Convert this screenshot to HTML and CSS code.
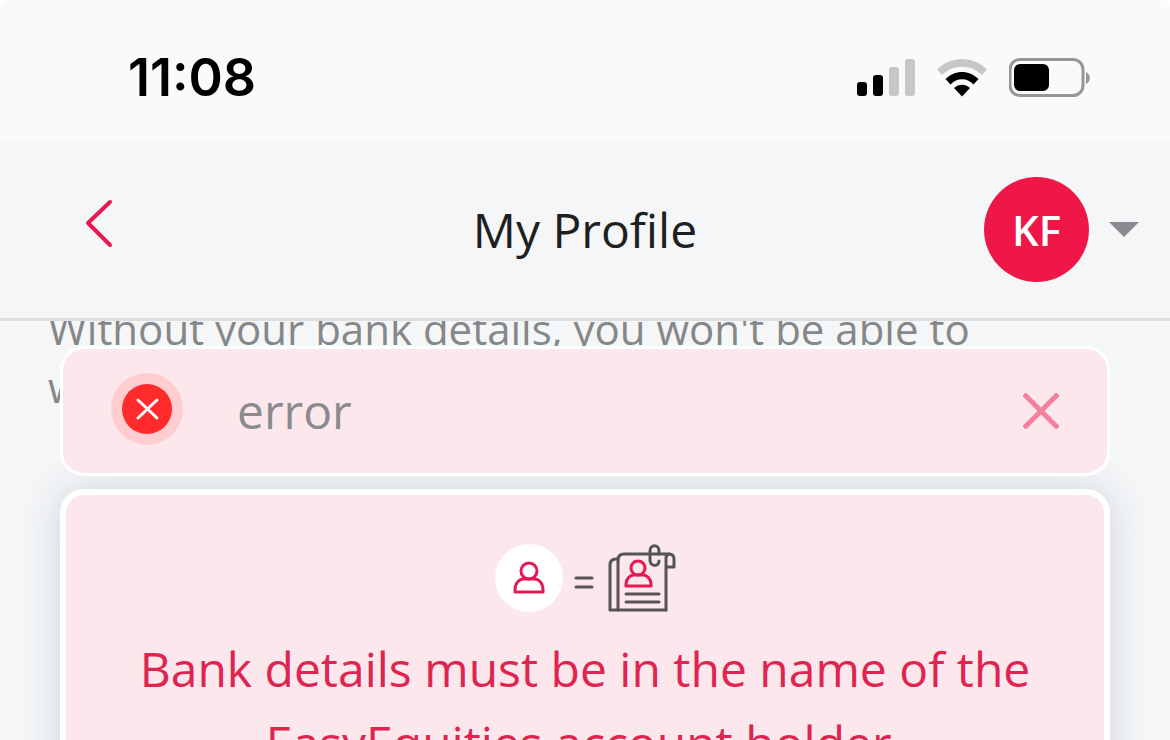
FILE: index.html
```html
<!DOCTYPE html>
<html lang="en">
<head>
  <meta charset="UTF-8" />
  <meta name="viewport" content="width=device-width, initial-scale=1.0"/>
  <title>My Profile</title>
  <link rel="stylesheet" href="styles.css">
</head>
<body>

  <div class="status-bar">
    <span class="time">11:08</span>
    <div class="status-icons">
      <svg class="signal" width="58" height="38" viewBox="0 0 58 38">
        <rect x="0" y="23" width="10" height="14" rx="3"/>
        <rect x="16" y="16" width="10" height="21" rx="3"/>
        <rect class="off" x="32" y="8" width="10" height="29" rx="3"/>
        <rect class="off" x="48" y="0" width="10" height="37" rx="3"/>
      </svg>
      <svg class="wifi" width="50" height="38" viewBox="0 0 50 38">
        <path class="off" d="M0 10.500C14 -3.500 36 -3.500 50 10.500L45 16C34 5 16 5 5 16Z"/>
        <path d="M8.500 20C18 10.500 32 10.500 41.500 20L36.500 25.500C30 18.500 20 18.500 13.500 25.500Z"/>
        <path d="M17 29C21.500 24.500 28.500 24.500 33 29L25 37.500Z"/>
      </svg>
      <svg class="battery" width="82" height="40" viewBox="0 0 82 40">
        <rect class="shell" x="1" y="1.500" width="73" height="36" rx="10"/>
        <rect x="5" y="6" width="35" height="27" rx="6"/>
        <path class="tip" d="M77 14C82 16 82 24 77 26Z"/>
      </svg>
    </div>
  </div>

  <header class="header">
    <button class="back-btn" type="button" aria-label="Back">
      <svg width="30" height="50" viewBox="0 0 30 50">
        <path d="M26 3L4 24L26 46"/>
      </svg>
    </button>
    <h1>My Profile</h1>
    <button class="account-btn" type="button" aria-label="Account menu">
      <span class="avatar">KF</span>
      <span class="caret"></span>
    </button>
  </header>

  <main class="content">
    <p class="intro">Without your bank details, you won't be able to withdraw</p>

    <div class="toast" role="alert">
      <svg class="toast-icon" width="72" height="72" viewBox="0 0 72 72">
        <circle cx="36" cy="36" r="36" fill="#ffcdcf"/>
        <circle cx="36" cy="36" r="25" fill="#ff2a2b"/>
        <path d="M27 27L46 45M46 27L27 45"/>
      </svg>
      <span class="toast-text">error</span>
      <button class="close-btn" type="button" aria-label="Close">
        <svg width="36" height="36" viewBox="0 0 36 36">
          <path d="M1 1L35 35M35 1L1 35"/>
        </svg>
      </button>
    </div>

    <section class="notice">
      <svg class="notice-icon" width="182" height="70" viewBox="0 0 182 70">
        <circle cx="35" cy="35" r="34" fill="#fff"/>
        <g class="person">
          <circle cx="35" cy="28" r="8"/>
          <path d="M21 49V47C21 40 25 36 30 36H40C45 36 49 40 49 47V49Z"/>
        </g>
        <g class="paper">
          <path d="M82 35H98M82 44H98"/>
          <path d="M124 67V17Q124 11 130 11H175Q180 11 180 16V24H172M172 67V15Q172 11 176 11"/>
          <path d="M172 67H116V22Q116 16 122 16H124"/>
          <path d="M132 51H165M132 59H165"/>
          <path d="M156 13V8C156 1 165 1 165 8V11M156 14V17C156 24 165 24 165 18"/>
        </g>
        <g class="person">
          <circle cx="144" cy="25" r="7"/>
          <path d="M132 43V41C132 36 136 32 140 32H149C153 32 157 36 157 41V43Z"/>
        </g>
      </svg>
      <p>Bank details must be in the name of the EasyEquities account holder.</p>
    </section>
  </main>

</body>
</html>
```
FILE: styles.css
```css
* {
  box-sizing: border-box;
}

html {
  background-color: #fff;
}

body {
  font-family: "Open Sans", "Noto Sans", sans-serif;
  background-color: #f4f6f8;
  margin: 0;
  height: 100vh;
  display: flex;
  flex-direction: column;
  overflow: hidden;
  border-radius: 10px 10px 0 0;
}

button {
  padding: 0;
  border: none;
  background: none;
  font-family: inherit;
  cursor: pointer;
}

svg {
  display: block;
}

.status-bar {
  display: flex;
  align-items: center;
  justify-content: space-between;
  padding: 40px 79px 25px 128px;
  background-color: #f9fafc;
  border-radius: 10px 10px 0 0;
}

.time {
  font-family: Inter, sans-serif;
  font-size: 52px;
  line-height: 76px;
  font-weight: 600;
}

.status-icons {
  display: flex;
  align-items: center;
  gap: 22px;
}

.off {
  fill: #c6c7c9;
}

.shell {
  fill: none;
  stroke: #959698;
  stroke-width: 3;
}

.tip {
  fill: #959698;
}

.header {
  display: grid;
  grid-template-columns: 1fr auto 1fr;
  align-items: center;
  padding: 36px 31px;
  border-bottom: 3px solid #dcdee0;
}

.header h1 {
  margin: 0;
  font-size: 48px;
  line-height: 66px;
  font-weight: 400;
  color: #1d1f21;
}

.back-btn {
  justify-self: start;
  padding: 0 0 12px 53px;
}

.back-btn path {
  fill: none;
  stroke: #e61a52;
  stroke-width: 4;
  stroke-linecap: round;
  stroke-linejoin: round;
}

.account-btn {
  display: flex;
  align-items: center;
  justify-self: end;
  gap: 20px;
}

.avatar {
  width: 105px;
  height: 105px;
  border-radius: 50%;
  background-color: #ee1747;
  color: #fff;
  font-size: 42px;
  line-height: 105px;
  font-weight: 600;
}

.caret {
  border: 15px solid transparent;
  border-top-color: #898a8e;
  border-bottom: none;
}

.content {
  position: relative;
  flex: 1;
  min-height: 0;
  padding: 0 60px;
  overflow: hidden;
}

/* scrolled partly under the header */
.intro {
  margin: -21px -12px 73px;
  font-size: 42px;
  line-height: 58px;
  color: #868789;
}

.toast {
  position: absolute;
  top: 25px;
  left: 60px;
  right: 60px;
  z-index: 1;
  display: flex;
  align-items: center;
  padding: 24px 48px;
  border: 3px solid #fff;
  border-radius: 24px;
  background-color: #fce8ec;
}

.toast-icon {
  align-self: flex-start;
}

.toast-icon path {
  stroke: #fff;
  stroke-width: 3;
  stroke-linecap: round;
}

.toast-text {
  flex: 1;
  margin-left: 54px;
  font-size: 48px;
  line-height: 76px;
  color: #8b8a8d;
}

.close-btn path {
  stroke: #f3809d;
  stroke-width: 5;
}

.notice {
  padding: 48px 48px 60px;
  border: 6px solid #fff;
  border-radius: 24px;
  background-color: #fce8ec;
  box-shadow: 0 0 40px rgba(40, 50, 65, 0.16);
}

.notice-icon {
  margin: 0 auto;
}

.notice p {
  margin: 19px 0 0;
  font-size: 48px;
  line-height: 74px;
  text-align: center;
  color: #e02450;
}

.person {
  fill: none;
  stroke: #e61a52;
  stroke-width: 3;
  stroke-linejoin: round;
}

.paper {
  fill: none;
  stroke: #555356;
  stroke-width: 3;
  stroke-linecap: round;
  stroke-linejoin: round;
}
```
